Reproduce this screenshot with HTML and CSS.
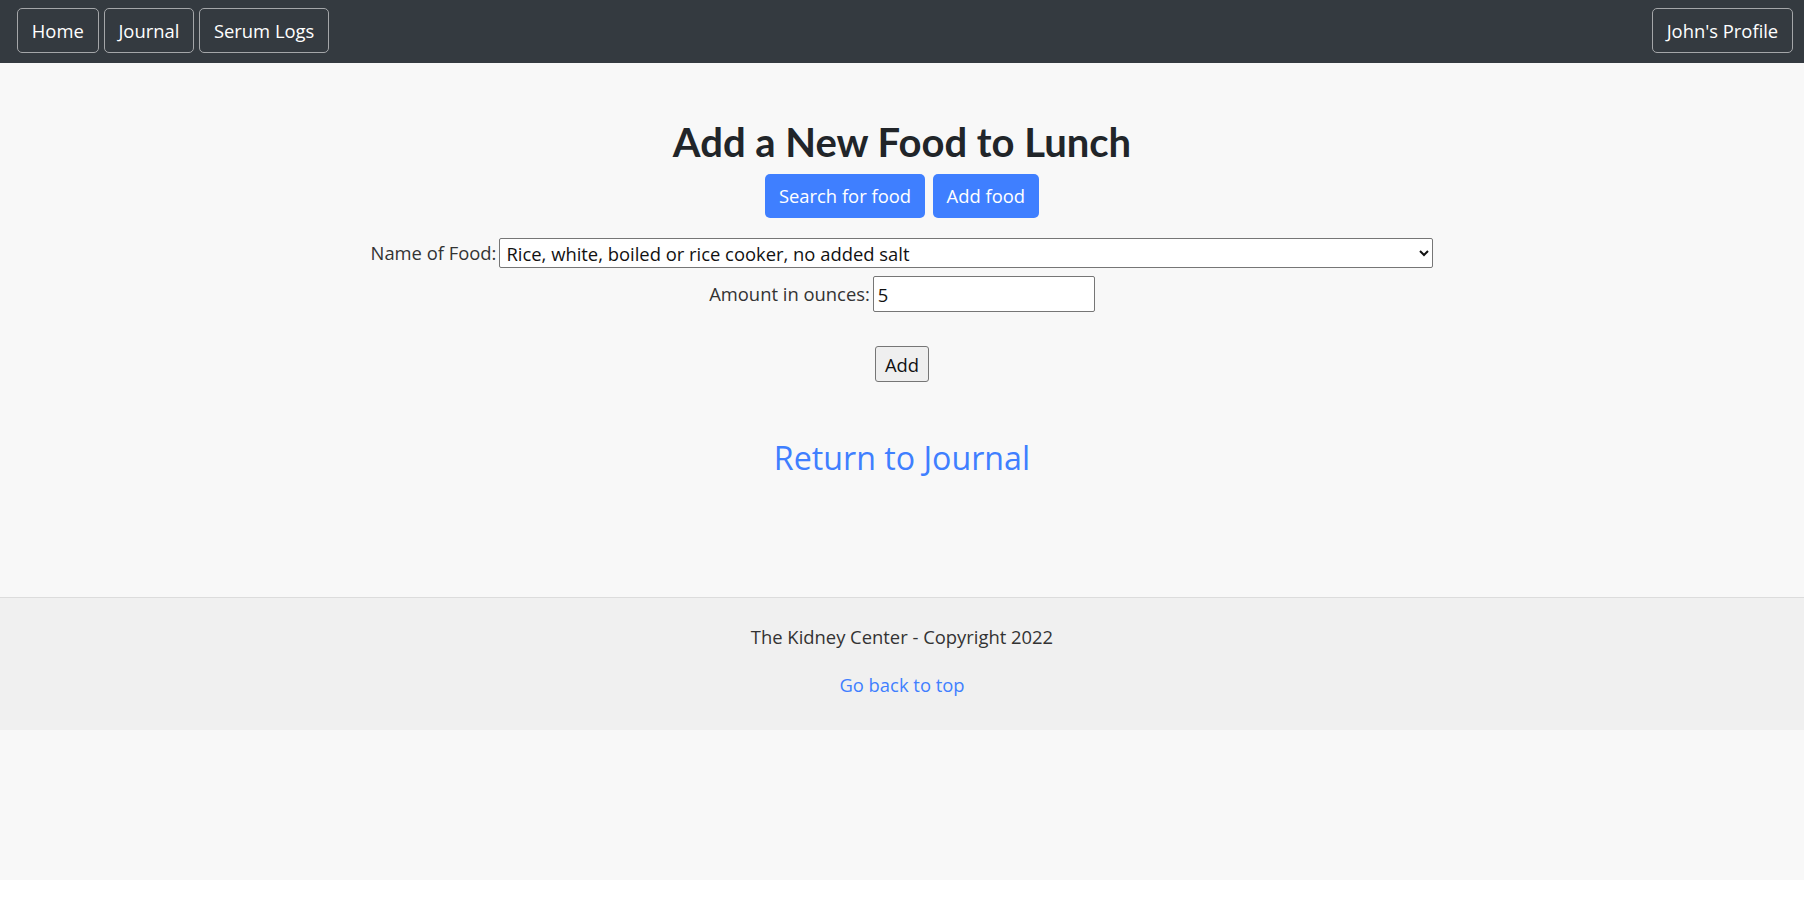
FILE: index.html
```html
<!DOCTYPE html>
<html lang="en">
<head>
<meta charset="utf-8">
<title>Add a New Food to Lunch</title>
<link rel="stylesheet" href="styles.css">
</head>
<body>
<div class="page">
  <nav class="navbar">
    <div class="nav-left">
      <a class="nav-btn" href="#">Home</a>
      <a class="nav-btn" href="#">Journal</a>
      <a class="nav-btn" href="#">Serum Logs</a>
    </div>
    <a class="nav-btn" href="#">John's Profile</a>
  </nav>
  <main class="main">
    <h1 class="title">Add a New Food to Lunch</h1>
    <div class="tabs">
      <a class="btn-primary" href="#">Search for food</a>
      <a class="btn-primary" href="#">Add food</a>
    </div>
    <form class="food-form">
      <div class="row">
        <label class="label" for="food">Name of Food:</label>
        <select id="food" class="select">
          <option>Rice, white, boiled or rice cooker, no added salt</option>
        </select>
      </div>
      <div class="row">
        <label class="label" for="amount">Amount in ounces:</label>
        <input id="amount" class="input" type="text" value="5">
      </div>
      <button class="add-btn" type="button">Add</button>
    </form>
    <a class="return-link" href="#">Return to Journal</a>
  </main>
  <footer class="footer">
    <p class="copyright">The Kidney Center - Copyright 2022</p>
    <a class="top-link" href="#">Go back to top</a>
  </footer>
</div>
</body>
</html>
```
FILE: styles.css
```css
html {
  background: #ffffff;
}
body {
  margin: 0;
  font-family: "Open Sans", "Noto Sans", sans-serif;
  font-size: 18.4px;
  line-height: 1.5;
  color: #212529;
}
.page {
  height: 880px;
  background: #f8f8f8;
  display: flex;
  flex-direction: column;
}
.navbar {
  height: 63px;
  box-sizing: border-box;
  background: #343a40;
  display: flex;
  justify-content: space-between;
  align-items: flex-start;
  padding: 8px 11px 0 17px;
}
.nav-left {
  display: flex;
  gap: 5px;
}
.nav-btn {
  display: inline-block;
  box-sizing: border-box;
  height: 45px;
  line-height: 27.6px;
  padding: 7.7px 13.8px;
  border: 1px solid #a4a6a9;
  border-radius: 5px;
  color: #ffffff;
  text-decoration: none;
  font-size: 18.4px;
}
.main {
  height: 534px;
  display: flex;
  flex-direction: column;
  align-items: center;
  padding-top: 52px;
  box-sizing: border-box;
}
.title {
  margin: 0 0 4px;
  font-family: "Lato", "Open Sans", sans-serif;
  font-size: 40px;
  line-height: 55px;
  font-weight: 700;
  color: #212529;
}
.tabs {
  display: flex;
  gap: 8px;
}
.btn-primary {
  display: inline-block;
  box-sizing: border-box;
  height: 44px;
  line-height: 27.6px;
  padding: 7.7px 13.8px;
  border-radius: 5px;
  background: #3f7fff;
  color: #ffffff;
  text-decoration: none;
}
.food-form {
  margin-top: 20px;
  display: flex;
  flex-direction: column;
  align-items: center;
}
.row {
  display: flex;
  align-items: center;
  justify-content: center;
  gap: 3px;
  margin-bottom: 8px;
  color: #333;
}
.select {
  width: 934px;
  height: 30px;
  box-sizing: border-box;
  font-family: inherit;
  font-size: 18.4px;
  color: #111;
  background: #ffffff;
  border: 1px solid #767676;
  border-radius: 2px;
  padding: 0 2px;
}
.input {
  width: 222px;
  height: 36px;
  box-sizing: border-box;
  font-family: inherit;
  font-size: 18.4px;
  color: #111;
  background: #ffffff;
  border: 1px solid #767676;
  border-radius: 2px;
  padding: 1px 4px;
}
.add-btn {
  margin-top: 26px;
  height: 36px;
  padding: 0 9px;
  font-family: inherit;
  font-size: 18.4px;
  color: #111;
  background: #efefef;
  border: 1px solid #767676;
  border-radius: 3px;
}
.return-link {
  margin-top: 57px;
  font-size: 32.2px;
  line-height: 38.6px;
  color: #3f7fff;
  text-decoration: none;
  font-weight: 500;
}
.footer {
  height: 133px;
  box-sizing: border-box;
  border-top: 1px solid #dcdcdc;
  background: #f0f0f0;
  display: flex;
  flex-direction: column;
  align-items: center;
  padding-top: 25px;
}
.copyright {
  margin: 0 0 20px;
  color: #333;
}
.top-link {
  color: #3f7fff;
  text-decoration: none;
}
```
